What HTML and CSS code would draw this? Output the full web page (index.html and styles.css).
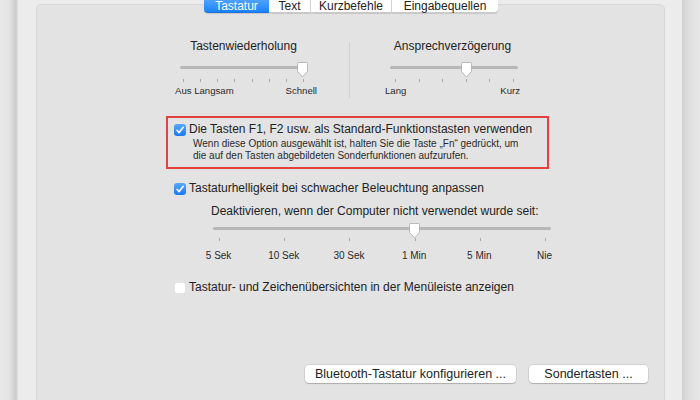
FILE: index.html
```html
<!DOCTYPE html>
<html lang="de">
<head>
<meta charset="utf-8">
<title>Tastatur</title>
<link rel="stylesheet" href="styles.css">
</head>
<body>
<div class="shadow-left"></div>
<div class="window">
  <div class="tabs">
    <div class="tab tab-sel w1">Tastatur</div>
    <div class="tab w2">Text</div>
    <div class="tab w3">Kurzbefehle</div>
    <div class="tab w4">Eingabequellen</div>
  </div>
  <div class="panel">
    <div class="slider-row">
      <div class="group g-left">
        <div class="g-title t-left">Tastenwiederholung</div>
        <div class="slider s-left">
          <div class="track"></div>
          <svg class="thumb th-left" width="13" height="16" viewBox="0 0 13 16"><path d="M1.5 1.5 Q1.5 0.5 2.5 0.5 H10.5 Q11.5 0.5 11.5 1.5 V9.5 L6.5 15 L1.5 9.5 Z" fill="#fff" stroke="#a9a9a9" stroke-width="0.8"/></svg>
        </div>
        <div class="ticks tk-left"><i></i><i></i><i></i><i></i><i></i><i></i><i></i><i></i></div>
        <div class="labels"><span>Aus Langsam</span><span>Schnell</span></div>
      </div>
      <div class="divider"></div>
      <div class="group g-right">
        <div class="g-title t-right">Ansprechverzögerung</div>
        <div class="slider s-right">
          <div class="track"></div>
          <svg class="thumb th-right" width="13" height="16" viewBox="0 0 13 16"><path d="M1.5 1.5 Q1.5 0.5 2.5 0.5 H10.5 Q11.5 0.5 11.5 1.5 V9.5 L6.5 15 L1.5 9.5 Z" fill="#fff" stroke="#a9a9a9" stroke-width="0.8"/></svg>
        </div>
        <div class="ticks tk-right"><i></i><i></i><i></i><i></i><i></i><i></i></div>
        <div class="labels"><span>Lang</span><span>Kurz</span></div>
      </div>
    </div>

    <div class="highlight">
      <div class="check-row">
        <svg class="cb" width="12" height="12" viewBox="0 0 12 12"><defs><linearGradient id="bl1" x1="0" y1="0" x2="0" y2="1"><stop offset="0" stop-color="#5aa7fb"/><stop offset="1" stop-color="#1b78f2"/></linearGradient></defs><rect x="0" y="0" width="12" height="12" rx="3" fill="url(#bl1)"/><path d="M3 6.3 L5.1 8.6 L9.2 3.3" fill="none" stroke="#fff" stroke-width="1.6" stroke-linecap="round" stroke-linejoin="round"/></svg>
        <span class="label">Die Tasten F1, F2 usw. als Standard-Funktionstasten verwenden</span>
      </div>
      <p class="hint">Wenn diese Option ausgewählt ist, halten Sie die Taste „Fn“ gedrückt, um<br>die auf den Tasten abgebildeten Sonderfunktionen aufzurufen.</p>
    </div>

    <div class="check-row row2">
      <svg class="cb" width="12" height="12" viewBox="0 0 12 12"><defs><linearGradient id="bl2" x1="0" y1="0" x2="0" y2="1"><stop offset="0" stop-color="#5aa7fb"/><stop offset="1" stop-color="#1b78f2"/></linearGradient></defs><rect x="0" y="0" width="12" height="12" rx="3" fill="url(#bl2)"/><path d="M3 6.3 L5.1 8.6 L9.2 3.3" fill="none" stroke="#fff" stroke-width="1.6" stroke-linecap="round" stroke-linejoin="round"/></svg>
      <span class="label">Tastaturhelligkeit bei schwacher Beleuchtung anpassen</span>
    </div>
    <div class="deact">Deaktivieren, wenn der Computer nicht verwendet wurde seit:</div>
    <div class="slider s-wide">
      <div class="track"></div>
      <svg class="thumb th-wide" width="13" height="16" viewBox="0 0 13 16"><path d="M1.5 1.5 Q1.5 0.5 2.5 0.5 H10.5 Q11.5 0.5 11.5 1.5 V9.5 L6.5 15 L1.5 9.5 Z" fill="#fff" stroke="#a9a9a9" stroke-width="0.8"/></svg>
    </div>
    <div class="ticks tk-wide"><i></i><i></i><i></i><i></i><i></i><i></i></div>
    <div class="wide-labels"><span>5 Sek</span><span>10 Sek</span><span>30 Sek</span><span>1 Min</span><span>5 Min</span><span>Nie</span></div>

    <div class="check-row row3">
      <svg class="cb" width="12" height="12" viewBox="0 0 12 12"><rect x="0.25" y="0.25" width="11.5" height="11.5" rx="2.5" fill="#fff" stroke="#c6c6c6" stroke-width="0.5"/></svg>
      <span class="label">Tastatur- und Zeichenübersichten in der Menüleiste anzeigen</span>
    </div>

    <div class="buttons">
      <div class="btn b1">Bluetooth-Tastatur konfigurieren ...</div>
      <div class="btn b2">Sondertasten ...</div>
    </div>
  </div>
</div>
<div class="shadow-right"></div>
</body>
</html>
```

FILE: styles.css
```css
* { box-sizing: border-box; }
html, body { margin: 0; padding: 0; }
body {
  width: 700px;
  height: 400px;
  overflow: hidden;
  display: flex;
  font-family: "Liberation Sans", Arial, sans-serif;
  color: #222;
  background: #ececec;
}
.shadow-left {
  width: 17px;
  flex: none;
  background: linear-gradient(to right, #e9e9e9 0, #e4e4e4 9px, #d6d6d6 13px, #cbcbcb 16px, #d9d9d9 17px);
}
.shadow-right {
  width: 18px;
  flex: none;
  background: linear-gradient(to right, #cfcfcf 0, #d9d9d9 4px, #e3e3e3 12px, #e7e7e7 18px);
}
.window {
  flex: 1;
  background: #ececec;
  padding: 0 17px 0 18px;
  display: flex;
  flex-direction: column;
  border-left: 1px solid #dedede;
}
.tabs {
  position: relative;
  z-index: 1;
  display: flex;
  justify-content: center;
  margin-top: -7px;
  height: 20px;
  flex: none;
  padding-left: 1px;
}
.tab {
  height: 20px;
  padding-top: 6px;
  line-height: 14px;
  font-size: 12px;
  text-align: center;
  background: #fff;
  color: #222;
  border-bottom: 1px solid #c9c9c9;
  border-right: 1px solid #d6d6d6;
  box-shadow: 0 0.5px 1px rgba(0,0,0,0.12);
}
.tab:last-child { border-right: 0; border-radius: 0 0 4px 0; }
.tab-sel {
  background: linear-gradient(#6db4fb, #1b83fb);
  color: #fff;
  border-right: 0;
  border-bottom: 1px solid #1a72e0;
  border-radius: 0 0 0 4px;
}
.w1 { width: 65px; }
.w2 { width: 42px; }
.w3 { width: 81px; }
.w4 { width: 106px; }

.panel {
  flex: 1;
  margin-top: -9px;
  margin-bottom: -20px;
  background: #e3e3e3;
  border: 1px solid #d8d8d8;
  border-radius: 5px;
}

/* Top sliders */
.slider-row {
  display: flex;
  margin-top: 34px;
  padding-left: 138px;
}
.group { display: flex; flex-direction: column; }
.g-left { width: 142px; }
.g-right { width: 135px; margin-left: 35px; }
.divider {
  width: 1px;
  height: 56px;
  margin-top: 3px;
  margin-left: 32px;
  background: #d0d0d0;
}
.g-title {
  font-size: 12px;
  line-height: 15px;
  text-align: center;
  color: #222;
}
.t-left { padding-right: 5px; }
.t-right { padding-left: 0; }

.slider {
  position: relative;
  height: 16px;
  margin-top: 8px;
}
.track {
  position: absolute;
  left: 0;
  right: 0;
  top: 4px;
  height: 3px;
  border-radius: 2px;
  background: #b7b7b7;
}
.thumb { position: absolute; top: 0; }
.s-left { margin-left: 5px; width: 127px; }
.th-left { left: 116px; }
.s-right { margin-left: 5px; width: 128px; }
.th-right { left: 70px; }

.ticks {
  display: flex;
  justify-content: space-between;
  height: 3px;
  margin-top: 1px;
}
.ticks i { display: block; width: 1px; height: 3px; background: #a8a8a8; }
.tk-left { margin-left: 8px; width: 121px; }
.tk-right { margin-left: 10px; width: 119px; }

.labels {
  display: flex;
  justify-content: space-between;
  font-size: 9.6px;
  line-height: 12px;
  margin-top: 3px;
  color: #2a2a2a;
}

/* highlight box */
.highlight {
  margin-top: 18px;
  margin-left: 129px;
  width: 383px;
  height: 53px;
  border: 2px solid #e2413f;
  padding: 4px 0 0 6px;
}
.check-row {
  display: flex;
  align-items: center;
  height: 15px;
}
.cb { flex: none; display: block; }
.label {
  margin-left: 3px;
  font-size: 12px;
  line-height: 15px;
  white-space: nowrap;
  color: #222;
}
.hint {
  margin: 1px 0 0 19px;
  font-size: 10px;
  line-height: 12px;
  color: #2a2a2a;
  white-space: nowrap;
}
.row2 { margin: 12px 0 0 137px; }
.row3 { margin: 18px 0 0 137px; }
.deact {
  margin: 8px 0 0 174px;
  font-size: 12px;
  line-height: 15px;
  white-space: nowrap;
}
.s-wide { margin-left: 176px; width: 338px; margin-top: 4px; }
.th-wide { left: 195px; }
.tk-wide { margin-left: 182px; width: 327px; margin-top: -1px; }
.wide-labels {
  display: grid;
  grid-template-columns: repeat(6, 65.2px);
  margin: 9px 0 0 149px;
  font-size: 10px;
  line-height: 12px;
  color: #2a2a2a;
}
.wide-labels span { text-align: center; }

.buttons {
  display: flex;
  gap: 13px;
  margin: 70px 0 0 268px;
}
.btn {
  height: 18px;
  line-height: 18px;
  font-size: 12.5px;
  text-align: center;
  background: #fff;
  border-radius: 4px;
  box-shadow: 0 0 0 0.5px rgba(0,0,0,0.14), 0 1px 1px rgba(0,0,0,0.18);
  color: #222;
}
.b1 { width: 211px; }
.b2 { width: 119px; }
```
